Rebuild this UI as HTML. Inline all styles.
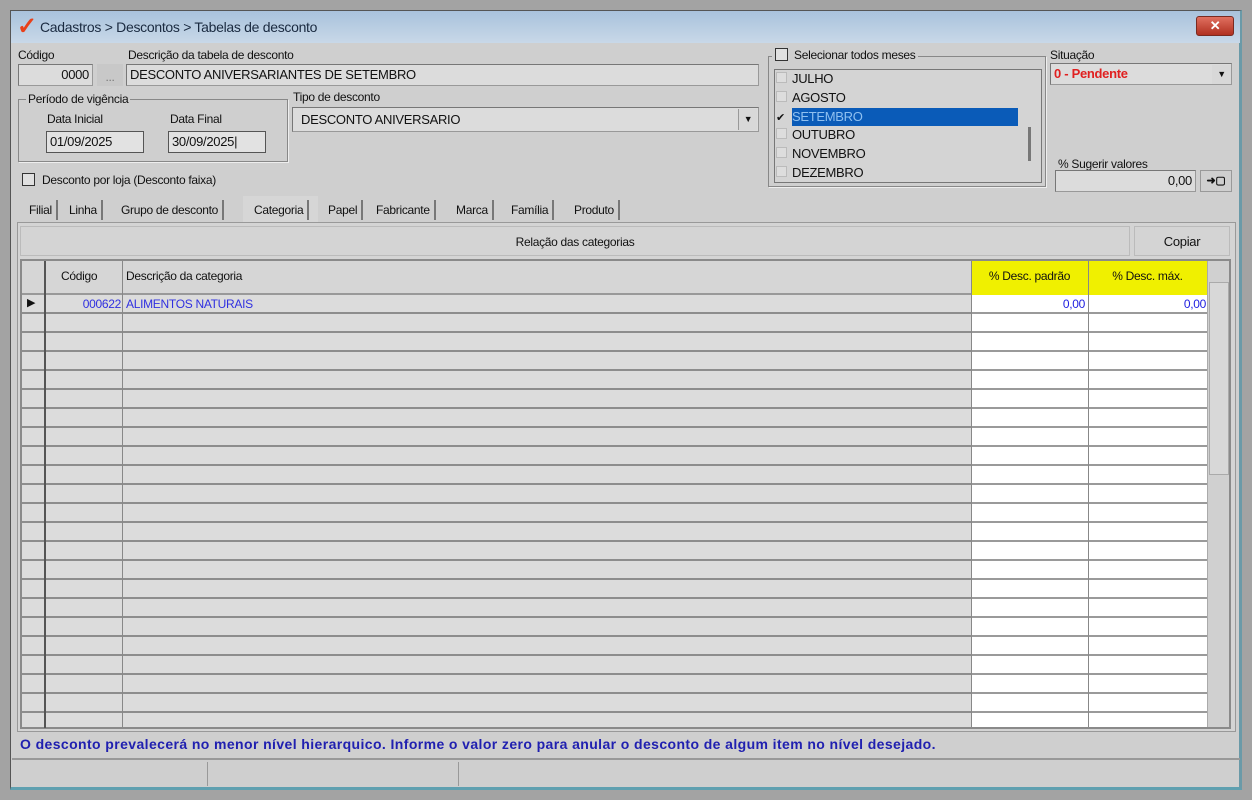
<!DOCTYPE html><html><head><style>
*{box-sizing:border-box;margin:0;padding:0}
body{width:1252px;height:800px;background:#a3a3a3;font-family:"Liberation Sans",sans-serif;font-size:12px;color:#111;position:relative;overflow:hidden;letter-spacing:-0.3px}
.a{position:absolute}
.win{left:10px;top:10px;width:1232px;height:780px;background:#cfcfcf;border:1px solid #555;border-bottom:3px solid #5fa0b0;border-right:3px solid #6a9aa8}
.title{left:11px;top:11px;width:1229px;height:32px;background:linear-gradient(#a9c2dc,#c8d8e8);}
.inp{background:#dcdcdc;border:1px solid #999;border-top-color:#777;border-left-color:#777;height:22px;line-height:20px;padding:0 3px;font-size:13px}
.lbl{font-size:12px}
.grp{border:1px solid #888;box-shadow:1px 1px 0 #eee}
.tab{top:200px;height:20px;line-height:20px;font-size:12px;border-right:2px solid #777;padding:0 4px}
.rows{background:repeating-linear-gradient(#dcdcdc 0 17px,#8d8d8d 17px 19px)}
.wrows{background:repeating-linear-gradient(#fff 0 17px,#9a9a9a 17px 19px)}
</style></head><body>
<div class="a win"></div>
<div class="a title"></div>
<div class="a" style="left:17px;top:14px;color:#e8401a;font-size:24px;font-weight:bold;line-height:26px">✓</div>
<div class="a" style="left:40px;top:19px;font-size:14px;color:#1a2a40">Cadastros &gt; Descontos &gt; Tabelas de desconto</div>
<div class="a" style="left:1196px;top:16px;width:38px;height:20px;background:linear-gradient(#e07060,#b03020);border:1px solid #7a2a20;border-radius:3px;color:#fff;text-align:center;font-weight:bold;line-height:18px;font-size:13px">✕</div>

<div class="a lbl" style="left:18px;top:48px">Código</div>
<div class="a inp" style="left:18px;top:64px;width:75px;text-align:right">0000</div>
<div class="a" style="left:97px;top:64px;width:26px;height:22px;background:#c8c8c8;text-align:center;color:#777;line-height:26px">...</div>
<div class="a lbl" style="left:128px;top:48px">Descrição da tabela de desconto</div>
<div class="a inp" style="left:126px;top:64px;width:633px">DESCONTO ANIVERSARIANTES DE SETEMBRO</div>

<div class="a grp" style="left:18px;top:99px;width:270px;height:63px"></div>
<div class="a lbl" style="left:26px;top:92px;background:#cfcfcf;padding:0 2px">Período de vigência</div>
<div class="a lbl" style="left:47px;top:112px">Data Inicial</div>
<div class="a inp" style="left:46px;top:131px;width:98px;background:#e2e2e2;border:1px solid #555">01/09/2025</div>
<div class="a lbl" style="left:170px;top:112px">Data Final</div>
<div class="a inp" style="left:168px;top:131px;width:98px;background:#e2e2e2;border:1px solid #555">30/09/2025|</div>
<div class="a lbl" style="left:293px;top:90px">Tipo de desconto</div>
<div class="a inp" style="left:292px;top:107px;width:467px;height:25px;line-height:24px;padding-left:8px">DESCONTO ANIVERSARIO</div>
<div class="a" style="left:738px;top:109px;width:19px;height:21px;background:#d8d8d8;border-left:1px solid #999;text-align:center;font-size:9px;line-height:21px">▼</div>

<div class="a" style="left:22px;top:173px;width:13px;height:13px;border:1px solid #333;background:#e0e0e0"></div>
<div class="a lbl" style="left:42px;top:173px">Desconto por loja (Desconto faixa)</div>

<div class="a grp" style="left:768px;top:56px;width:278px;height:131px"></div>
<div class="a" style="left:772px;top:48px;background:#cfcfcf;padding:0 3px;font-size:12px"><span style="display:inline-block;width:13px;height:13px;border:1px solid #333;vertical-align:-2px;margin-right:6px;background:#e0e0e0"></span>Selecionar todos meses</div>
<div class="a" style="left:774px;top:69px;width:268px;height:114px;border:1px solid #777;background:#d4d4d4"></div>
<div class="a" style="left:776px;top:70px;font-size:13px;line-height:18.8px">
<div><span style="display:inline-block;width:11px;height:11px;border:1px solid #bbb;background:#ddd;margin-right:5px"></span>JULHO</div>
<div><span style="display:inline-block;width:11px;height:11px;border:1px solid #bbb;background:#ddd;margin-right:5px"></span>AGOSTO</div>
<div><span style="display:inline-block;width:11px;height:11px;margin-right:5px;font-size:11px">✔</span><span style="background:#0a5bb8;color:#8fc0f0;display:inline-block;width:226px">SETEMBRO</span></div>
<div><span style="display:inline-block;width:11px;height:11px;border:1px solid #bbb;background:#ddd;margin-right:5px"></span>OUTUBRO</div>
<div><span style="display:inline-block;width:11px;height:11px;border:1px solid #bbb;background:#ddd;margin-right:5px"></span>NOVEMBRO</div>
<div><span style="display:inline-block;width:11px;height:11px;border:1px solid #bbb;background:#ddd;margin-right:5px"></span>DEZEMBRO</div>
</div>
<div class="a" style="left:1028px;top:127px;width:3px;height:34px;background:#777"></div>

<div class="a lbl" style="left:1050px;top:48px">Situação</div>
<div class="a inp" style="left:1050px;top:63px;width:182px;color:#e02020;font-weight:bold;font-size:13px">0 - Pendente</div>
<div class="a" style="left:1212px;top:65px;width:19px;height:19px;background:#d8d8d8;text-align:center;font-size:9px;line-height:19px">▼</div>
<div class="a lbl" style="left:1058px;top:157px">% Sugerir valores</div>
<div class="a inp" style="left:1055px;top:170px;width:141px;text-align:right">0,00</div>
<div class="a" style="left:1200px;top:170px;width:32px;height:22px;border:1px solid #999;text-align:center;font-size:11px;line-height:20px;font-weight:bold">➜▢</div>

<div class="a tab" style="left:25px">Filial</div>
<div class="a tab" style="left:65px">Linha</div>
<div class="a tab" style="left:117px">Grupo de desconto</div>
<div class="a" style="left:243px;top:196px;width:75px;height:26px;background:#d6d6d6"></div>
<div class="a tab" style="left:250px">Categoria</div>
<div class="a tab" style="left:324px">Papel</div>
<div class="a tab" style="left:372px">Fabricante</div>
<div class="a tab" style="left:452px">Marca</div>
<div class="a tab" style="left:507px">Família</div>
<div class="a tab" style="left:570px">Produto</div>

<div class="a" style="left:17px;top:222px;width:1219px;height:510px;border:1px solid #999;background:#d4d4d4"></div>
<div class="a" style="left:20px;top:226px;width:1110px;height:30px;background:#d4d4d4;border:1px solid #bbb;text-align:center;line-height:30px">Relação das categorias</div>
<div class="a" style="left:1134px;top:226px;width:96px;height:30px;background:#d4d4d4;border:1px solid #bbb;text-align:center;line-height:30px;font-size:13px">Copiar</div>

<div class="a" style="left:20px;top:259px;width:1211px;height:470px;background:#cfcfcf;border:2px solid #8a8a8a"></div>
<div class="a" style="left:22px;top:261px;width:949px;height:34px;background:#d6d6d6;border-bottom:2px solid #999"></div>
<div class="a" style="left:44px;top:261px;width:2px;height:467px;background:#555"></div>
<div class="a" style="left:122px;top:261px;width:1px;height:467px;background:#888"></div>
<div class="a" style="left:61px;top:269px">Código</div>
<div class="a" style="left:126px;top:269px">Descrição da categoria</div>
<div class="a" style="left:971px;top:261px;width:236px;height:34px;background:#f0f000;border-left:1px solid #888"></div>
<div class="a" style="left:1088px;top:261px;width:1px;height:34px;background:#888"></div>
<div class="a" style="left:971px;top:269px;width:117px;text-align:center">% Desc. padrão</div>
<div class="a" style="left:1088px;top:269px;width:119px;text-align:center">% Desc. máx.</div>
<div class="a rows" style="left:22px;top:295px;width:22px;height:432px"></div>
<div class="a rows" style="left:46px;top:295px;width:76px;height:432px"></div>
<div class="a rows" style="left:123px;top:295px;width:848px;height:432px"></div>
<div class="a wrows" style="left:971px;top:295px;width:117px;height:432px;border-left:1px solid #888"></div>
<div class="a wrows" style="left:1088px;top:295px;width:119px;height:432px;border-left:1px solid #888"></div>
<div class="a" style="left:1207px;top:261px;width:22px;height:466px;background:#d0d0d0;border-left:1px solid #aaa"></div>
<div class="a" style="left:1209px;top:282px;width:20px;height:193px;background:#d8d8d8;border:1px solid #aaa"></div>
<div class="a" style="left:27px;top:296px;font-size:11px">▶</div>
<div class="a" style="left:46px;top:297px;width:75px;text-align:right;color:#3030e0">000622</div>
<div class="a" style="left:126px;top:297px;color:#3030e0">ALIMENTOS NATURAIS</div>
<div class="a" style="left:971px;top:297px;width:114px;text-align:right;color:#2020e0">0,00</div>
<div class="a" style="left:1088px;top:297px;width:118px;text-align:right;color:#2020e0">0,00</div>

<div class="a" style="left:20px;top:736px;color:#2020b0;font-weight:bold;font-size:14px;letter-spacing:0.4px;white-space:nowrap">O desconto prevalecerá no menor nível hierarquico. Informe o valor zero para anular o desconto de algum item no nível desejado.</div>
<div class="a" style="left:12px;top:758px;width:1228px;height:2px;background:#999"></div>
<div class="a" style="left:207px;top:762px;width:1px;height:24px;background:#999"></div>
<div class="a" style="left:458px;top:762px;width:1px;height:24px;background:#999"></div>
</body></html>
